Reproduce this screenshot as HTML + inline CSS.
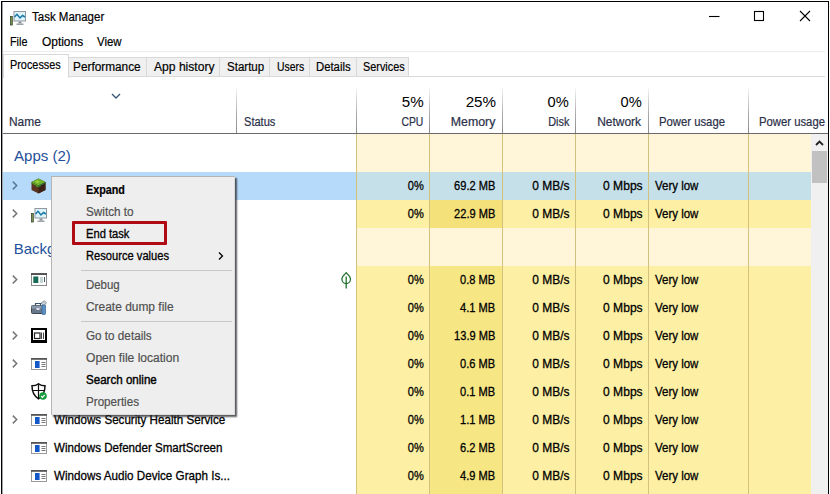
<!DOCTYPE html>
<html><head><meta charset="utf-8"><title>Task Manager</title>
<style>
*{box-sizing:border-box;margin:0;padding:0}
html,body{width:830px;height:494px;overflow:hidden;background:#fff}
body{font-family:"Liberation Sans",sans-serif;font-size:12.5px;color:#000;position:relative;-webkit-text-stroke:0.2px}
#win{position:absolute;left:1px;top:1px;width:828px;height:500px;border:1px solid #000;border-bottom:none;background:#fff}
.a{position:absolute;white-space:nowrap;line-height:14px}
.hm{position:absolute}
.vl{position:absolute;width:1px;background:#b4b4b4}
.vh{position:absolute;width:1px;top:88px;height:45px;background:linear-gradient(to bottom,#f4f4f4,#a8a8a8 60%,#8c8c8c)}
.ts{position:absolute;width:1px;background:#d9d9d9;top:57px;height:20px}
</style></head><body>
<div id="win"></div>
<div class="hm" style="left:2px;top:2px;width:1px;height:492px;background:#a4a4ac"></div>

<!-- title bar -->
<svg class="a" style="left:10px;top:10.500px" width="16" height="15" viewBox="0 0 16 15"><rect x="0.5" y="5.500" width="1.800" height="8.500" fill="#7d9a50" stroke="#3a4a30" stroke-width="0.800"/><rect x="4" y="0.500" width="11.500" height="9.500" fill="#dff3fa" stroke="#8f979f"/><path d="M4.500 6 L7 3.300 L10 7 L12.500 4.500 L15 6" fill="none" stroke="#1878a8" stroke-width="1.500"/><rect x="8.500" y="10.500" width="3" height="2" fill="#8a9298"/><rect x="6.500" y="12.500" width="7" height="1.500" fill="#9aa2a8"/></svg>
<svg class="a" style="left:700px;top:8px" width="125" height="18" viewBox="0 0 125 18">
<path d="M9 8.500H19.500" stroke="#000" stroke-width="1.100"/>
<rect x="54.500" y="3.500" width="9" height="9" fill="none" stroke="#000" stroke-width="1.100"/>
<path d="M100 3L110 13M110 3L100 13" stroke="#000" stroke-width="1.100"/>
</svg>

<!-- tabs -->
<div class="hm" style="left:3px;top:51px;width:822px;height:1px;background:#ececec"></div>
<div class="hm" style="left:3px;top:76px;width:822px;height:1px;background:#d9d9d9"></div>
<div class="hm" id="tabs" style="left:68px;top:57px;width:341px;height:20px;background:#f0f0f0;border:1px solid #d9d9d9"></div>
<div class="hm" style="left:3px;top:54px;width:66px;height:24px;background:#fff;border:1px solid #d9d9d9;border-bottom:none"></div>
<div class="ts" style="left:146px"></div>
<div class="ts" style="left:219px"></div>
<div class="ts" style="left:269px"></div>
<div class="ts" style="left:309px"></div>
<div class="ts" style="left:356px"></div>

<!-- heat columns -->
<div class="hm" style="left:357px;top:134px;width:454px;height:360px;background:#fdf0a4"></div>
<div class="hm" style="left:357px;top:134px;width:454px;height:38px;background:#fff6da"></div>
<div class="hm" style="left:357px;top:228px;width:454px;height:38px;background:#fff6da"></div>
<div class="hm" style="left:430px;top:200px;width:72px;height:28px;background:#f5e17a"></div>
<div class="hm" style="left:430px;top:266px;width:72px;height:228px;background:#f7e684"></div>
<!-- selected row -->
<div class="hm" style="left:3px;top:172px;width:354px;height:28px;background:#b6dbfa"></div>
<div class="hm" style="left:357px;top:172px;width:454px;height:28px;background:#c6e0ea"></div>

<!-- header lines -->
<div class="hm" style="left:3px;top:133px;width:825px;height:1px;background:#6a6a6a"></div>
<div class="vh" style="left:236px"></div>
<div class="vh" style="left:356px"></div>
<div class="vh" style="left:429px"></div>
<div class="vh" style="left:502px"></div>
<div class="vh" style="left:575px"></div>
<div class="vh" style="left:648px"></div>
<div class="vh" style="left:748px"></div>
<div class="vl" style="left:356px;top:134px;height:360px;background:#d2c27e"></div>
<div class="vl" style="left:429px;top:134px;height:360px;background:#d2c27e"></div>
<div class="vl" style="left:502px;top:134px;height:360px;background:#d2c27e"></div>
<div class="vl" style="left:575px;top:134px;height:360px;background:#d2c27e"></div>
<div class="vl" style="left:648px;top:134px;height:360px;background:#d2c27e"></div>
<div class="vl" style="left:748px;top:134px;height:360px;background:#d2c27e"></div>
<svg class="a" style="left:110.500px;top:91.500px" width="10" height="8" viewBox="0 0 10 8"><path d="M1 2L5 6L9 2" fill="none" stroke="#3c5878" stroke-width="1.400"/></svg>

<!-- scrollbar -->
<div class="hm" style="left:811px;top:134px;width:17px;height:360px;background:#f0f0f0"></div>
<div class="hm" style="left:812px;top:151px;width:15px;height:32px;background:#c1c1c1"></div>
<svg class="a" style="left:815px;top:140px" width="9" height="7" viewBox="0 0 9 7"><path d="M1 5L4.500 1.500L8 5" fill="none" stroke="#222" stroke-width="1.800"/></svg>

<div class="a" id="title" style="left:31.8px;top:10px;transform:scaleX(0.920);transform-origin:0 50%;">Task Manager</div>
<div class="a" id="mfile" style="left:9.6px;top:35px;transform:scaleX(0.863);transform-origin:0 50%;">File</div>
<div class="a" id="mopt" style="left:41.8px;top:35px;transform:scaleX(0.954);transform-origin:0 50%;">Options</div>
<div class="a" id="mview" style="left:97.3px;top:35px;transform:scaleX(0.912);transform-origin:0 50%;">View</div>
<div class="a" id="t1" style="left:10.1px;top:58px;transform:scaleX(0.869);transform-origin:0 50%;">Processes</div>
<div class="a" id="t2" style="left:73.4px;top:60px;transform:scaleX(0.945);transform-origin:0 50%;">Performance</div>
<div class="a" id="t3" style="left:153.5px;top:60px;transform:scaleX(0.968);transform-origin:0 50%;">App history</div>
<div class="a" id="t4" style="left:226.5px;top:60px;transform:scaleX(0.923);transform-origin:0 50%;">Startup</div>
<div class="a" id="t5" style="left:276.6px;top:60px;transform:scaleX(0.830);transform-origin:0 50%;">Users</div>
<div class="a" id="t6" style="left:316.4px;top:60px;transform:scaleX(0.905);transform-origin:0 50%;">Details</div>
<div class="a" id="t7" style="left:363.4px;top:60px;transform:scaleX(0.868);transform-origin:0 50%;">Services</div>
<div class="a" id="hname" style="left:9.4px;top:114.5px;color:#2a2f48;font-size:12px;transform:scaleX(0.993);transform-origin:0 50%;">Name</div>
<div class="a" id="hstatus" style="left:243.6px;top:114.5px;color:#2a2f48;font-size:12px;transform:scaleX(0.923);transform-origin:0 50%;">Status</div>
<div class="a" id="h5" style="right:406.8px;top:93px;font-size:15px;line-height:17px;-webkit-text-stroke:0;transform:scaleX(1.010);transform-origin:100% 50%;">5%</div>
<div class="a" id="h25" style="right:334.3px;top:93px;font-size:15px;line-height:17px;-webkit-text-stroke:0;transform:scaleX(1.012);transform-origin:100% 50%;">25%</div>
<div class="a" id="h0d" style="right:261.1px;top:93px;font-size:15px;line-height:17px;-webkit-text-stroke:0;transform:scaleX(0.978);transform-origin:100% 50%;">0%</div>
<div class="a" id="h0n" style="right:188.5px;top:93px;font-size:15px;line-height:17px;-webkit-text-stroke:0;transform:scaleX(0.978);transform-origin:100% 50%;">0%</div>
<div class="a" id="hcpu" style="right:407.1px;top:114.5px;color:#2a2f48;font-size:12px;transform:scaleX(0.864);transform-origin:100% 50%;">CPU</div>
<div class="a" id="hmem" style="right:334.3px;top:114.5px;color:#2a2f48;font-size:12px;transform:scaleX(1.029);transform-origin:100% 50%;">Memory</div>
<div class="a" id="hdisk" style="right:261.1px;top:114.5px;color:#2a2f48;font-size:12px;transform:scaleX(0.908);transform-origin:100% 50%;">Disk</div>
<div class="a" id="hnet" style="right:188.5px;top:114.5px;color:#2a2f48;font-size:12px;transform:scaleX(0.997);transform-origin:100% 50%;">Network</div>
<div class="a" id="hp1" style="left:658.5px;top:114.5px;color:#2a2f48;font-size:12px;transform:scaleX(0.942);transform-origin:0 50%;">Power usage</div>
<div class="a" id="hp2" style="left:758.7px;top:114.5px;color:#2a2f48;font-size:12px;transform:scaleX(0.942);transform-origin:0 50%;">Power usage</div>
<div class="a" id="apps" style="left:13.7px;top:147px;font-size:15px;line-height:18px;color:#23509a;-webkit-text-stroke:0;transform:scaleX(1.002);transform-origin:0 50%;">Apps (2)</div>
<div class="a" id="bg" style="left:13.7px;top:240px;font-size:15px;line-height:18px;color:#23509a;-webkit-text-stroke:0;">Background processes (38)</div>
<div class="a" id="c0" style="right:406.6px;top:179px;font-size:13px;-webkit-text-stroke:0.3px;transform:scaleX(0.851);transform-origin:100% 50%;">0%</div>
<div class="a" id="m0" style="right:334.5px;top:179px;font-size:13px;-webkit-text-stroke:0.3px;transform:scaleX(0.853);transform-origin:100% 50%;">69.2 MB</div>
<div class="a" id="d0" style="right:261.0px;top:179px;font-size:13px;-webkit-text-stroke:0.3px;transform:scaleX(0.919);transform-origin:100% 50%;">0 MB/s</div>
<div class="a" id="w0" style="right:187.7px;top:179px;font-size:13px;-webkit-text-stroke:0.3px;transform:scaleX(0.929);transform-origin:100% 50%;">0 Mbps</div>
<div class="a" id="p0" style="left:655.4px;top:179px;font-size:13px;-webkit-text-stroke:0.3px;transform:scaleX(0.883);transform-origin:0 50%;">Very low</div>
<div class="a" id="c1" style="right:406.6px;top:207px;font-size:13px;-webkit-text-stroke:0.3px;transform:scaleX(0.851);transform-origin:100% 50%;">0%</div>
<div class="a" id="m1" style="right:334.5px;top:207px;font-size:13px;-webkit-text-stroke:0.3px;transform:scaleX(0.853);transform-origin:100% 50%;">22.9 MB</div>
<div class="a" id="d1" style="right:261.0px;top:207px;font-size:13px;-webkit-text-stroke:0.3px;transform:scaleX(0.919);transform-origin:100% 50%;">0 MB/s</div>
<div class="a" id="w1" style="right:187.7px;top:207px;font-size:13px;-webkit-text-stroke:0.3px;transform:scaleX(0.929);transform-origin:100% 50%;">0 Mbps</div>
<div class="a" id="p1" style="left:655.4px;top:207px;font-size:13px;-webkit-text-stroke:0.3px;transform:scaleX(0.883);transform-origin:0 50%;">Very low</div>
<div class="a" id="c2" style="right:406.6px;top:273px;font-size:13px;-webkit-text-stroke:0.3px;transform:scaleX(0.851);transform-origin:100% 50%;">0%</div>
<div class="a" id="m2" style="right:334.5px;top:273px;font-size:13px;-webkit-text-stroke:0.3px;transform:scaleX(0.853);transform-origin:100% 50%;">0.8 MB</div>
<div class="a" id="d2" style="right:261.0px;top:273px;font-size:13px;-webkit-text-stroke:0.3px;transform:scaleX(0.919);transform-origin:100% 50%;">0 MB/s</div>
<div class="a" id="w2" style="right:187.7px;top:273px;font-size:13px;-webkit-text-stroke:0.3px;transform:scaleX(0.929);transform-origin:100% 50%;">0 Mbps</div>
<div class="a" id="p2" style="left:655.4px;top:273px;font-size:13px;-webkit-text-stroke:0.3px;transform:scaleX(0.883);transform-origin:0 50%;">Very low</div>
<div class="a" id="c3" style="right:406.6px;top:301px;font-size:13px;-webkit-text-stroke:0.3px;transform:scaleX(0.851);transform-origin:100% 50%;">0%</div>
<div class="a" id="m3" style="right:334.5px;top:301px;font-size:13px;-webkit-text-stroke:0.3px;transform:scaleX(0.853);transform-origin:100% 50%;">4.1 MB</div>
<div class="a" id="d3" style="right:261.0px;top:301px;font-size:13px;-webkit-text-stroke:0.3px;transform:scaleX(0.919);transform-origin:100% 50%;">0 MB/s</div>
<div class="a" id="w3" style="right:187.7px;top:301px;font-size:13px;-webkit-text-stroke:0.3px;transform:scaleX(0.929);transform-origin:100% 50%;">0 Mbps</div>
<div class="a" id="p3" style="left:655.4px;top:301px;font-size:13px;-webkit-text-stroke:0.3px;transform:scaleX(0.883);transform-origin:0 50%;">Very low</div>
<div class="a" id="c4" style="right:406.6px;top:329px;font-size:13px;-webkit-text-stroke:0.3px;transform:scaleX(0.851);transform-origin:100% 50%;">0%</div>
<div class="a" id="m4" style="right:334.5px;top:329px;font-size:13px;-webkit-text-stroke:0.3px;transform:scaleX(0.853);transform-origin:100% 50%;">13.9 MB</div>
<div class="a" id="d4" style="right:261.0px;top:329px;font-size:13px;-webkit-text-stroke:0.3px;transform:scaleX(0.919);transform-origin:100% 50%;">0 MB/s</div>
<div class="a" id="w4" style="right:187.7px;top:329px;font-size:13px;-webkit-text-stroke:0.3px;transform:scaleX(0.929);transform-origin:100% 50%;">0 Mbps</div>
<div class="a" id="p4" style="left:655.4px;top:329px;font-size:13px;-webkit-text-stroke:0.3px;transform:scaleX(0.883);transform-origin:0 50%;">Very low</div>
<div class="a" id="c5" style="right:406.6px;top:357px;font-size:13px;-webkit-text-stroke:0.3px;transform:scaleX(0.851);transform-origin:100% 50%;">0%</div>
<div class="a" id="m5" style="right:334.5px;top:357px;font-size:13px;-webkit-text-stroke:0.3px;transform:scaleX(0.853);transform-origin:100% 50%;">0.6 MB</div>
<div class="a" id="d5" style="right:261.0px;top:357px;font-size:13px;-webkit-text-stroke:0.3px;transform:scaleX(0.919);transform-origin:100% 50%;">0 MB/s</div>
<div class="a" id="w5" style="right:187.7px;top:357px;font-size:13px;-webkit-text-stroke:0.3px;transform:scaleX(0.929);transform-origin:100% 50%;">0 Mbps</div>
<div class="a" id="p5" style="left:655.4px;top:357px;font-size:13px;-webkit-text-stroke:0.3px;transform:scaleX(0.883);transform-origin:0 50%;">Very low</div>
<div class="a" id="c6" style="right:406.6px;top:385px;font-size:13px;-webkit-text-stroke:0.3px;transform:scaleX(0.851);transform-origin:100% 50%;">0%</div>
<div class="a" id="m6" style="right:334.5px;top:385px;font-size:13px;-webkit-text-stroke:0.3px;transform:scaleX(0.853);transform-origin:100% 50%;">0.1 MB</div>
<div class="a" id="d6" style="right:261.0px;top:385px;font-size:13px;-webkit-text-stroke:0.3px;transform:scaleX(0.919);transform-origin:100% 50%;">0 MB/s</div>
<div class="a" id="w6" style="right:187.7px;top:385px;font-size:13px;-webkit-text-stroke:0.3px;transform:scaleX(0.929);transform-origin:100% 50%;">0 Mbps</div>
<div class="a" id="p6" style="left:655.4px;top:385px;font-size:13px;-webkit-text-stroke:0.3px;transform:scaleX(0.883);transform-origin:0 50%;">Very low</div>
<div class="a" id="n7" style="left:53.6px;top:413px;font-size:13px;-webkit-text-stroke:0.3px;transform:scaleX(0.894);transform-origin:0 50%;">Windows Security Health Service</div>
<div class="a" id="c7" style="right:406.6px;top:413px;font-size:13px;-webkit-text-stroke:0.3px;transform:scaleX(0.851);transform-origin:100% 50%;">0%</div>
<div class="a" id="m7" style="right:334.5px;top:413px;font-size:13px;-webkit-text-stroke:0.3px;transform:scaleX(0.853);transform-origin:100% 50%;">1.1 MB</div>
<div class="a" id="d7" style="right:261.0px;top:413px;font-size:13px;-webkit-text-stroke:0.3px;transform:scaleX(0.919);transform-origin:100% 50%;">0 MB/s</div>
<div class="a" id="w7" style="right:187.7px;top:413px;font-size:13px;-webkit-text-stroke:0.3px;transform:scaleX(0.929);transform-origin:100% 50%;">0 Mbps</div>
<div class="a" id="p7" style="left:655.4px;top:413px;font-size:13px;-webkit-text-stroke:0.3px;transform:scaleX(0.883);transform-origin:0 50%;">Very low</div>
<div class="a" id="n8" style="left:53.6px;top:441px;font-size:13px;-webkit-text-stroke:0.3px;transform:scaleX(0.890);transform-origin:0 50%;">Windows Defender SmartScreen</div>
<div class="a" id="c8" style="right:406.6px;top:441px;font-size:13px;-webkit-text-stroke:0.3px;transform:scaleX(0.851);transform-origin:100% 50%;">0%</div>
<div class="a" id="m8" style="right:334.5px;top:441px;font-size:13px;-webkit-text-stroke:0.3px;transform:scaleX(0.853);transform-origin:100% 50%;">6.2 MB</div>
<div class="a" id="d8" style="right:261.0px;top:441px;font-size:13px;-webkit-text-stroke:0.3px;transform:scaleX(0.919);transform-origin:100% 50%;">0 MB/s</div>
<div class="a" id="w8" style="right:187.7px;top:441px;font-size:13px;-webkit-text-stroke:0.3px;transform:scaleX(0.929);transform-origin:100% 50%;">0 Mbps</div>
<div class="a" id="p8" style="left:655.4px;top:441px;font-size:13px;-webkit-text-stroke:0.3px;transform:scaleX(0.883);transform-origin:0 50%;">Very low</div>
<div class="a" id="n9" style="left:53.6px;top:469px;font-size:13px;-webkit-text-stroke:0.3px;transform:scaleX(0.895);transform-origin:0 50%;">Windows Audio Device Graph Is...</div>
<div class="a" id="c9" style="right:406.6px;top:469px;font-size:13px;-webkit-text-stroke:0.3px;transform:scaleX(0.851);transform-origin:100% 50%;">0%</div>
<div class="a" id="m9" style="right:334.5px;top:469px;font-size:13px;-webkit-text-stroke:0.3px;transform:scaleX(0.853);transform-origin:100% 50%;">4.9 MB</div>
<div class="a" id="d9" style="right:261.0px;top:469px;font-size:13px;-webkit-text-stroke:0.3px;transform:scaleX(0.919);transform-origin:100% 50%;">0 MB/s</div>
<div class="a" id="w9" style="right:187.7px;top:469px;font-size:13px;-webkit-text-stroke:0.3px;transform:scaleX(0.929);transform-origin:100% 50%;">0 Mbps</div>
<div class="a" id="p9" style="left:655.4px;top:469px;font-size:13px;-webkit-text-stroke:0.3px;transform:scaleX(0.883);transform-origin:0 50%;">Very low</div>
<svg class="a" style="left:12px;top:181px" width="6" height="10" viewBox="0 0 6 10"><path d="M0.800 0.600L4.700 4.500L0.800 8.400" fill="none" stroke="#57789a" stroke-width="1.500"/></svg>
<svg class="a" style="left:31px;top:178px" width="15" height="16" viewBox="0 0 15 16"><path d="M7.500 0.500L14.500 4V12L7.500 15.500L0.500 12V4Z" fill="#5a3420"/><path d="M7.500 7.500V15.500L14.500 12V4Z" fill="#3c2216"/><path d="M7.500 0.500L14.500 4L7.500 7.500L0.500 4Z" fill="#6cb52d"/><path d="M0.500 4L7.500 7.500V9.500L5 8.500V7.500L2.500 7V6L0.500 5.500Z" fill="#4e9424"/><path d="M14.500 4L7.500 7.500V9.500L10 8V7L12.500 6.500V5.500L14.500 5.500Z" fill="#2f7a3a"/><path d="M4 3.500L7 2.500L9 4L6 5Z" fill="#a8d040"/></svg>
<svg class="a" style="left:12px;top:209px" width="6" height="10" viewBox="0 0 6 10"><path d="M0.800 0.600L4.700 4.500L0.800 8.400" fill="none" stroke="#767676" stroke-width="1.500"/></svg>
<svg class="a" style="left:31px;top:208px" width="16" height="15" viewBox="0 0 16 15"><rect x="0.5" y="5.500" width="1.800" height="8.500" fill="#7d9a50" stroke="#3a4a30" stroke-width="0.800"/><rect x="4" y="0.500" width="11.500" height="9.500" fill="#dff3fa" stroke="#8f979f"/><path d="M4.500 6 L7 3.300 L10 7 L12.500 4.500 L15 6" fill="none" stroke="#1878a8" stroke-width="1.500"/><rect x="8.500" y="10.500" width="3" height="2" fill="#8a9298"/><rect x="6.500" y="12.500" width="7" height="1.500" fill="#9aa2a8"/></svg>
<svg class="a" style="left:12px;top:275px" width="6" height="10" viewBox="0 0 6 10"><path d="M0.800 0.600L4.700 4.500L0.800 8.400" fill="none" stroke="#767676" stroke-width="1.500"/></svg>
<svg class="a" style="left:31px;top:273px" width="16" height="13" viewBox="0 0 16 13"><rect x="0.5" y="0.5" width="15" height="12" fill="#fff" stroke="#8a8a8a"/><rect x="0" y="0" width="16" height="2" fill="#555"/><rect x="2.300" y="3.500" width="5" height="6.500" fill="#156b55"/><path d="M9 5h3M9 7h3M9 9h3" stroke="#8aa" stroke-width="1"/><path d="M13.500 4v5" stroke="#456" stroke-width="1"/></svg>
<svg class="a" style="left:340.5px;top:271.5px" width="11" height="17" viewBox="0 0 11 17"><path d="M5.200 0.800C3 3 0.900 4.500 0.900 7C0.900 9.800 3 11.600 5.200 11.600C7.400 11.600 9.500 9.800 9.500 7C9.500 4.500 7.400 3 5.200 0.800Z" fill="none" stroke="#22702f" stroke-width="1.300"/><path d="M5.200 4.500V16.400" stroke="#22702f" stroke-width="1.300"/></svg>
<svg class="a" style="left:31px;top:300px" width="16" height="15" viewBox="0 0 16 15"><rect x="0.5" y="5.500" width="13" height="8" rx="1" fill="#66788a" stroke="#3c4854"/><rect x="0.5" y="5.500" width="13" height="3" fill="#8a9aaa"/><path d="M4.500 5.500V3.500H9.500V5.500" fill="none" stroke="#3a546e" stroke-width="1.200"/><rect x="5.500" y="8" width="3" height="2" fill="#dde"/><path d="M10 3L13.500 0.800L15.500 2.800L13 6Z" fill="#c8d0d8" stroke="#6a7a8a" stroke-width="0.700"/><rect x="11" y="5" width="3.500" height="9.500" rx="1" fill="#5a90c4" stroke="#34608e" stroke-width="0.700"/></svg>
<svg class="a" style="left:12px;top:331px" width="6" height="10" viewBox="0 0 6 10"><path d="M0.800 0.600L4.700 4.500L0.800 8.400" fill="none" stroke="#767676" stroke-width="1.500"/></svg>
<svg class="a" style="left:31px;top:328px" width="16" height="15" viewBox="0 0 16 15"><rect x="1" y="1" width="14" height="13" fill="#fff" stroke="#000" stroke-width="2"/><rect x="1" y="12" width="14" height="2.500" fill="#000"/><rect x="3.500" y="5" width="5.500" height="5.500" fill="none" stroke="#222" stroke-width="1.200"/><path d="M10.500 4.500v6.500M12.500 4.500v6.500" stroke="#444" stroke-width="1"/></svg>
<svg class="a" style="left:12px;top:359px" width="6" height="10" viewBox="0 0 6 10"><path d="M0.800 0.600L4.700 4.500L0.800 8.400" fill="none" stroke="#767676" stroke-width="1.500"/></svg>
<svg class="a" style="left:31px;top:358px" width="16" height="12" viewBox="0 0 16 12"><rect x="0.5" y="0.5" width="15" height="11" fill="#fff" stroke="#9a9a9a"/><rect x="0" y="0" width="16" height="1.800" fill="#555"/><rect x="4" y="3" width="4.600" height="7" fill="#1458c8"/><path d="M10.500 4.500h4M10.500 6.500h4M10.500 8.500h4" stroke="#777" stroke-width="1"/></svg>
<svg class="a" style="left:31px;top:383px" width="16" height="17" viewBox="0 0 16 17"><path d="M7.500 0.800C5.500 2.300 3.300 2.800 1 2.800C1 8.500 2.500 12.800 7.500 15.800C12.500 12.800 14 8.500 14 2.800C11.700 2.800 9.500 2.300 7.500 0.800Z" fill="#fff" stroke="#111" stroke-width="1.500"/><path d="M7.500 1.500V15M1.500 7.500H13.500" stroke="#111" stroke-width="1.200"/><circle cx="12" cy="13" r="3.800" fill="#169c3c"/><path d="M10.200 13l1.300 1.400 2.300-2.600" fill="none" stroke="#fff" stroke-width="1.200"/></svg>
<svg class="a" style="left:12px;top:415px" width="6" height="10" viewBox="0 0 6 10"><path d="M0.800 0.600L4.700 4.500L0.800 8.400" fill="none" stroke="#767676" stroke-width="1.500"/></svg>
<svg class="a" style="left:31px;top:414px" width="16" height="12" viewBox="0 0 16 12"><rect x="0.5" y="0.5" width="15" height="11" fill="#fff" stroke="#9a9a9a"/><rect x="0" y="0" width="16" height="1.800" fill="#555"/><rect x="4" y="3" width="4.600" height="7" fill="#1458c8"/><path d="M10.500 4.500h4M10.500 6.500h4M10.500 8.500h4" stroke="#777" stroke-width="1"/></svg>
<svg class="a" style="left:31px;top:442px" width="16" height="12" viewBox="0 0 16 12"><rect x="0.5" y="0.5" width="15" height="11" fill="#fff" stroke="#9a9a9a"/><rect x="0" y="0" width="16" height="1.800" fill="#555"/><rect x="4" y="3" width="4.600" height="7" fill="#1458c8"/><path d="M10.500 4.500h4M10.500 6.500h4M10.500 8.500h4" stroke="#777" stroke-width="1"/></svg>
<svg class="a" style="left:31px;top:470px" width="16" height="12" viewBox="0 0 16 12"><rect x="0.5" y="0.5" width="15" height="11" fill="#fff" stroke="#9a9a9a"/><rect x="0" y="0" width="16" height="1.800" fill="#555"/><rect x="4" y="3" width="4.600" height="7" fill="#1458c8"/><path d="M10.500 4.500h4M10.500 6.500h4M10.500 8.500h4" stroke="#777" stroke-width="1"/></svg>

<!-- context menu -->
<div class="hm" id="menu" style="left:51px;top:176px;width:184px;height:239px;background:#eeeeee;border:1px solid #b4b4b4;border-right-color:#dcdcdc;border-bottom-color:#dcdcdc;box-shadow:2px 2px 1.500px rgba(40,40,45,.75)"></div>
<div class="hm" style="left:81px;top:270px;width:151px;height:1px;background:#c8c8c8"></div>
<div class="hm" style="left:81px;top:321px;width:151px;height:1px;background:#c8c8c8"></div>
<div class="a" id="x0" style="left:86.4px;top:183px;font-weight:bold;transform:scaleX(0.861);transform-origin:0 50%;">Expand</div>
<div class="a" id="x1" style="left:86.4px;top:205px;color:#505050;transform:scaleX(0.939);transform-origin:0 50%;">Switch to</div>
<div class="a" id="x2" style="left:86.4px;top:227px;-webkit-text-stroke:0.3px;transform:scaleX(0.892);transform-origin:0 50%;">End task</div>
<div class="a" id="x3" style="left:86.4px;top:249px;-webkit-text-stroke:0.3px;transform:scaleX(0.892);transform-origin:0 50%;">Resource values</div>
<div class="a" id="x4" style="left:86.4px;top:278px;color:#505050;transform:scaleX(0.915);transform-origin:0 50%;">Debug</div>
<div class="a" id="x5" style="left:86.4px;top:300px;color:#505050;transform:scaleX(0.955);transform-origin:0 50%;">Create dump file</div>
<div class="a" id="x6" style="left:86.4px;top:329px;color:#505050;transform:scaleX(0.936);transform-origin:0 50%;">Go to details</div>
<div class="a" id="x7" style="left:86.4px;top:351px;color:#505050;transform:scaleX(0.965);transform-origin:0 50%;">Open file location</div>
<div class="a" id="x8" style="left:86.4px;top:373px;-webkit-text-stroke:0.4px;transform:scaleX(0.926);transform-origin:0 50%;">Search online</div>
<div class="a" id="x9" style="left:86.4px;top:395px;color:#505050;transform:scaleX(0.930);transform-origin:0 50%;">Properties</div>
<svg class="a" style="left:217px;top:251px" width="7" height="10" viewBox="0 0 7 10"><path d="M2 1.500L5.500 5L2 8.500" fill="none" stroke="#000" stroke-width="1.300"/></svg>
<div class="hm" style="left:72px;top:221px;width:95px;height:24px;border:3px solid #b00a14;border-radius:1px"></div>
</body></html>
